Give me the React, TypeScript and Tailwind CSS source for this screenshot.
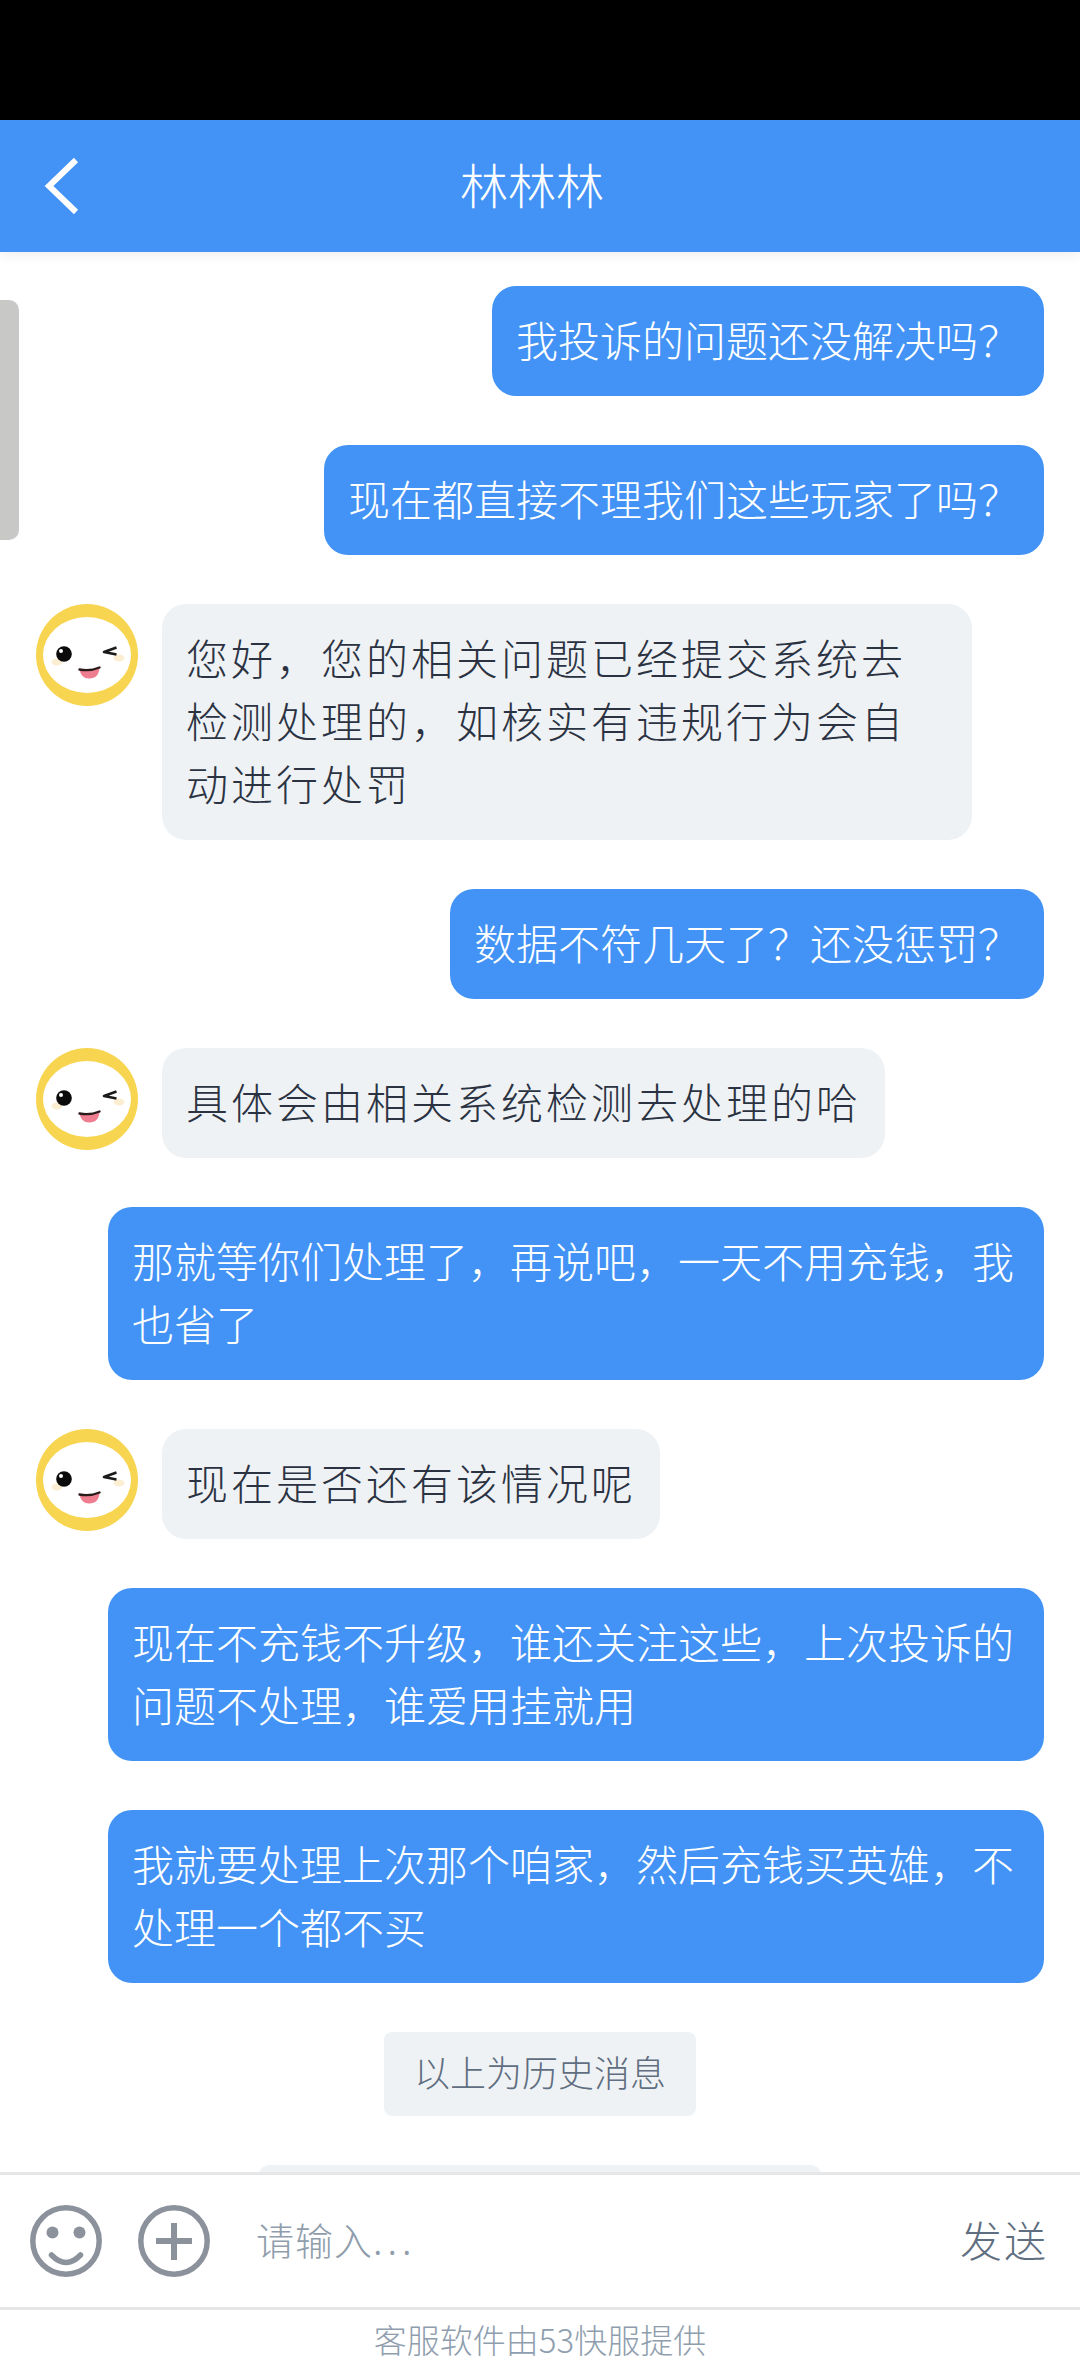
const FONT = "font-['Noto_Sans_CJK_SC','Noto_Sans',sans-serif]";

const Avatar = () => (
  <svg viewBox="0 0 102 102" className="w-[102px] h-[102px] shrink-0">
    <circle cx="51" cy="51" r="51" fill="#f8d550" />
    <ellipse cx="51" cy="51" rx="44" ry="38" fill="#fff" />
    {/* blush */}
    <ellipse cx="21" cy="58" rx="5.5" ry="3.5" fill="#fbeed2" />
    <ellipse cx="83" cy="54" rx="5.5" ry="3.5" fill="#fbeed2" />
    {/* left eye */}
    <circle cx="28" cy="50" r="7.8" fill="#0b0b0b" />
    <circle cx="25" cy="47" r="2" fill="#fff" />
    {/* wink */}
    <path d="M80.5 43.5 L68 48 L80.5 50.5" fill="none" stroke="#1a1a1a" strokeWidth="2.6" strokeLinejoin="round" />
    {/* mouth */}
    <path d="M43.5 65.5 Q54 67.5 63.5 63.5 Q63 74.5 53 74.5 Q45 74.5 43.5 65.5 Z" fill="#ee7d90" />
    <path d="M43.5 65.5 Q54 67.5 63.5 63.5" fill="none" stroke="#2a1a1a" strokeWidth="2.4" strokeLinecap="round" />
  </svg>
);

const UserBubble = ({ text }: { text: string }) => (
  <div className="flex justify-end pr-[36px]">
    <div className="w-fit max-w-[936px] bg-[#4293f5] text-white rounded-[24px] px-[24px] pt-[20.5px] pb-[26.5px] text-[42px] leading-[63px]">
      {text}
    </div>
  </div>
);

const AgentBubble = ({ text }: { text: string }) => (
  <div className="flex items-start gap-[24px] pl-[36px]">
    <Avatar />
    <div className="w-fit max-w-[810px] bg-[#eff2f5] text-[#2b3342] rounded-[24px] px-[24px] pt-[20.5px] pb-[26.5px] text-[42px] leading-[63px] tracking-[3px]">
      {text}
    </div>
  </div>
);

const EmojiIcon = () => (
  <svg viewBox="0 0 72 72" className="w-[72px] h-[72px]" fill="none" stroke="#8c929c">
    <circle cx="36" cy="36" r="33.2" strokeWidth="5.5" />
    <circle cx="22.5" cy="27.5" r="6" fill="#8c929c" stroke="none" />
    <circle cx="49.5" cy="27.5" r="6" fill="#8c929c" stroke="none" />
    <path d="M21.5 50 Q36 65 50.5 50" strokeWidth="5.5" strokeLinecap="round" />
  </svg>
);

const PlusIcon = () => (
  <svg viewBox="0 0 72 72" className="w-[72px] h-[72px]" fill="none" stroke="#8c929c">
    <circle cx="36" cy="36" r="33.2" strokeWidth="5.5" />
    <path d="M36 18 V55 M18 36 H54" strokeWidth="6" />
  </svg>
);

export default function App() {
  return (
    <div className={`${FONT} font-light relative w-[1080px] h-[2376px] flex flex-col bg-white overflow-hidden`}>
      {/* Status bar */}
      <div className="h-[120px] bg-black shrink-0" />

      {/* Header */}
      <header className="relative h-[132px] shrink-0 bg-[#4293f5] flex items-center justify-center shadow-[0_4px_10px_rgba(0,0,0,0.06)] z-10">
        <svg viewBox="0 0 40 60" className="absolute left-[40px] top-[36px] w-[40px] h-[60px]" fill="none" stroke="#fff" strokeWidth="6">
          <path d="M36 4 L9 30 L36 56" />
        </svg>
        <span className="text-white text-[48px] leading-none pr-[16px] pb-[6px]">林林林</span>
      </header>

      {/* Scroll handle */}
      <div className="absolute left-0 top-[300px] w-[19px] h-[240px] bg-[#c8c9c7] rounded-r-[10px]" />

      {/* Messages */}
      <main className="flex-1 min-h-0 overflow-hidden pt-[34px] flex flex-col gap-[49px]">
        <UserBubble text="我投诉的问题还没解决吗？" />
        <UserBubble text="现在都直接不理我们这些玩家了吗？" />
        <AgentBubble text="您好，您的相关问题已经提交系统去检测处理的，如核实有违规行为会自动进行处罚" />
        <UserBubble text="数据不符几天了？还没惩罚？" />
        <AgentBubble text="具体会由相关系统检测去处理的哈" />
        <UserBubble text="那就等你们处理了，再说吧，一天不用充钱，我也省了" />
        <AgentBubble text="现在是否还有该情况呢" />
        <UserBubble text="现在不充钱不升级，谁还关注这些，上次投诉的问题不处理，谁爱用挂就用" />
        <UserBubble text="我就要处理上次那个咱家，然后充钱买英雄，不处理一个都不买" />
        <div className="flex justify-center">
          <div className="bg-[#eff2f5] text-[#5f6e80] rounded-[8px] px-[30px] pb-[6px] text-[36px] leading-[78px]">以上为历史消息</div>
        </div>
        <div className="flex justify-center shrink-0">
          <div className="w-[564px] h-[84px] bg-[#eff2f5] rounded-[12px]" />
        </div>
      </main>

      {/* Input bar */}
      <div className="h-[138px] shrink-0 border-y-[3px] border-[#e6e6e6] bg-white flex items-center pl-[30px] pr-[32px] gap-[36px]">
        <EmojiIcon />
        <PlusIcon />
        <div className="flex-1 pl-[10px] pb-[6px] text-[38px] text-[#8f9dac] tracking-[1px]">
          请输入<span className="tracking-[5px]">...</span>
        </div>
        <div className="pb-[6px] text-[42px] text-[#5f6e80] tracking-[2px]">发送</div>
      </div>

      {/* Footer */}
      <footer className="h-[66px] shrink-0 flex items-center justify-center pb-[7px] text-[33px] text-[#8f9eae]">
        客服软件由53快服提供
      </footer>
    </div>
  );
}
